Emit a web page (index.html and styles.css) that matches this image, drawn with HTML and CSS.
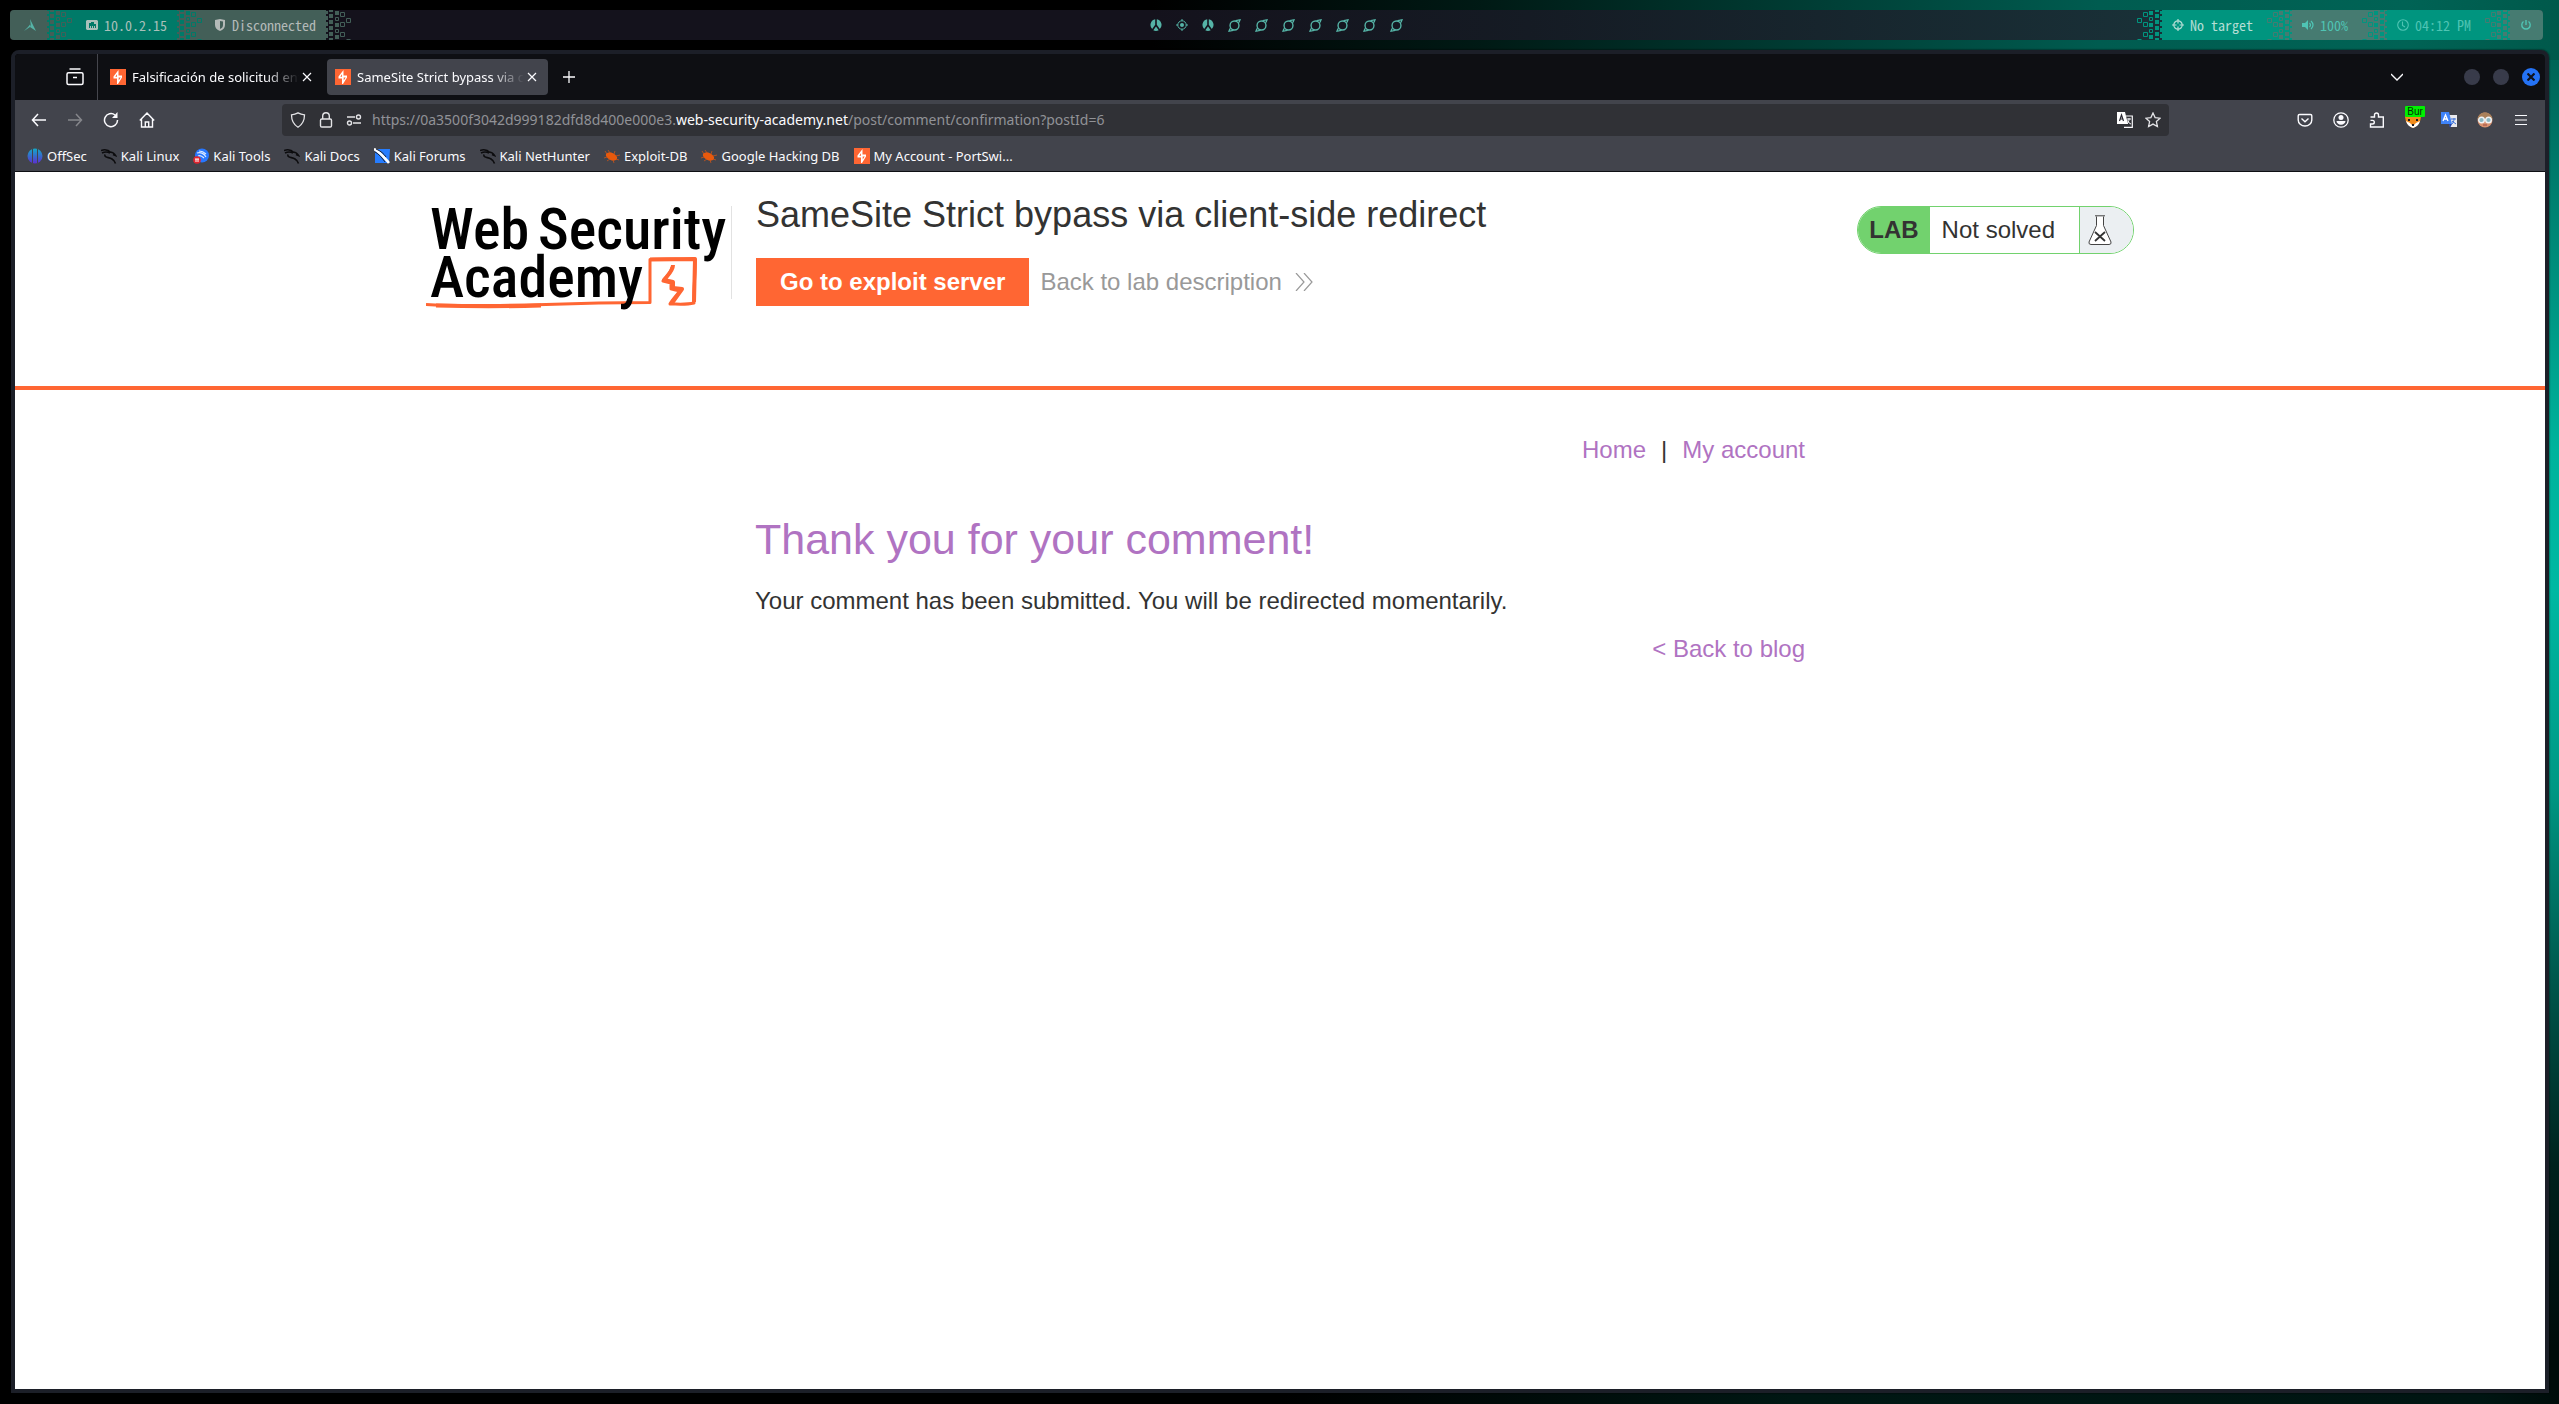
FILE: index.html
```html
<!DOCTYPE html>
<html lang="en">
<head>
<meta charset="utf-8">
<title>SameSite Strict bypass via client-side redirect</title>
<link rel="stylesheet" href="styles.css">
</head>
<body>
<svg class="defs" aria-hidden="true">
  <symbol id="fade" viewBox="0 0 28 30">
    <path fill="currentColor" d="M0 0h3v30H0zM3 1h2v3H3zM3 6h2v4H3zM3 12h2v4H3zM3 18h2v4H3zM3 24h2v4H3zM6 0h4v2H6zM6 4h4v4H6zM6 10h4v4H6zM6 16h4v4H6zM6 22h4v4H6zM6 28h4v2H6zM12 1h4v4h-4zM12 13h4v4h-4zM12 25h4v4h-4z"/>
    <path fill="none" stroke="currentColor" d="M12.500 7.500h3v3h-3zM12.500 19.500h3v3h-3zM17.500 2.500h4v4h-4zM17.500 12.500h4v4h-4zM17.500 22.500h4v4h-4zM23.500 8.500h4v4h-4zM23.500 29.500h4"/>
  </symbol>
  <symbol id="portswigger" viewBox="0 0 16 16">
    <path fill="#ff6633" d="M0 0h16v16H0z"/><path fill="#fff" d="M8.500 1v5.500H12v2L8 15H7V9.500H3.500v-2z"/><path fill="#ff6633" d="M7 5.200 5.300 7.700H7zM8.700 8.500v3l2-3z"/>
  </symbol>
  <symbol id="kali" viewBox="0 0 16 16">
    <path fill="none" stroke="#0c0c0e" stroke-width="1.600" d="M0 2.500c4-1.500 8 0 10 2M1 5c3-1.500 6-1 8 0M4 6.500C3 10 8 9 11 11c2 1.300 3 2.500 3.500 4.500M9 4c2 0 4 1 5.500 3.500L12 6.500"/>
  </symbol>
  <symbol id="bug" viewBox="0 0 16 16">
    <ellipse cx="7.500" cy="8.500" rx="6" ry="3.600" transform="rotate(25 7.500 8.500)" fill="#e8590c"/>
    <path stroke="#c9561b" stroke-width=".800" fill="none" d="M3 6 1 3M6 5 4 2M10 6l1-3M12 8l4-1M12 11l3 1M9 12l1 3M6 11l-3 2M3 9l-3 1"/>
  </symbol>
  <symbol id="radio" viewBox="0 0 12 12"><path fill="currentColor" d="M5.200.300v5.500L2.200 10A5.700 5.700 0 0 1 5.200.300zM6.800.300v5.500l3 4.200A5.700 5.700 0 0 0 6.800.300zM6 7.500l2.700 3.700a5.700 5.700 0 0 1-5.400 0z"/></symbol>
  <symbol id="planet" viewBox="0 0 14 14"><circle cx="7" cy="7" r="4.800" fill="none" stroke="currentColor" stroke-width="1.500"/><path stroke="currentColor" stroke-width="1.300" fill="none" d="M8 1.700C10 1.500 12 1 13 .800c-.500 1.500-1 2.500-1.700 3.200M6 12.300C4 12.500 2 13 1 13.200c.500-1.500 1-2.500 1.700-3.200"/></symbol>
  <symbol id="target" viewBox="0 0 12 12"><circle cx="6" cy="6" r="4.200" fill="none" stroke="currentColor"/><circle cx="6" cy="6" r="2" fill="currentColor"/><path stroke="currentColor" d="M6 0v2M6 10v2M0 6h2M10 6h2"/></symbol>
  <symbol id="crosshair" viewBox="0 0 12 12"><circle cx="6" cy="6" r="4.200" fill="none" stroke="currentColor" stroke-width="1.200"/><path stroke="currentColor" stroke-width="1.200" d="M6 0v4.500M6 7.500V12M0 6h4.500M7.500 6H12"/></symbol>
  <symbol id="close" viewBox="0 0 16 16"><path stroke="currentColor" stroke-width="1.200" d="m4 4 8 8M12 4l-8 8"/></symbol>
</svg>

<header class="panel">
  <div class="panel-group">
    <span class="seg slate first"><svg class="i12" viewBox="0 0 12 12"><path fill="#55b3a6" d="M6 0 12 12 6 8 0 12 4 8 6 5.500 7 8z"/></svg></span>
    <svg class="fade slate-on-green"><use href="#fade"/></svg>
    <span class="seg green ip"><svg class="i12" viewBox="0 0 12 12"><path fill="currentColor" fill-rule="evenodd" d="M1 1h10l1 1v8l-1 1H1l-1-1V2zM3 4v5h1V7h1v2h1V7h1v2h1V7h1v2h1V5H8V3H5v1z"/></svg>10.0.2.15</span>
    <svg class="fade green-on-slate"><use href="#fade"/></svg>
    <span class="seg slate vpn"><svg class="i12" viewBox="0 0 12 12"><path fill="currentColor" fill-rule="evenodd" d="M1 1 6 0l5 1v5c0 3-2 5-5 6-3-1-5-3-5-6zM6 2v8c2-1 3-2 3-4V2.500z"/></svg>Disconnected</span>
    <svg class="fade slate-edge"><use href="#fade"/></svg>
  </div>
  <div class="workspaces">
    <svg class="i12"><use href="#radio"/></svg><svg class="i12"><use href="#target"/></svg><svg class="i12"><use href="#radio"/></svg><svg class="i13"><use href="#planet"/></svg><svg class="i13"><use href="#planet"/></svg><svg class="i13"><use href="#planet"/></svg><svg class="i13"><use href="#planet"/></svg><svg class="i13"><use href="#planet"/></svg><svg class="i13"><use href="#planet"/></svg><svg class="i13"><use href="#planet"/></svg>
  </div>
  <div class="panel-group right">
    <svg class="fade mirror teal-edge"><use href="#fade"/></svg>
    <span class="seg teal goal"><svg class="i12"><use href="#crosshair"/></svg>No target</span>
    <svg class="fade mirror gray-on-teal"><use href="#fade"/></svg>
    <span class="seg gray"><svg class="i12" viewBox="0 0 12 12"><path fill="currentColor" d="M0 4h3l3-3v10L3 8H0z"/><path fill="none" stroke="currentColor" stroke-width="1.200" d="M7.500 4c1.300 1.300 1.300 2.700 0 4M9 2c2.500 2.500 2.500 5.500 0 8"/></svg>100%</span>
    <svg class="fade mirror teal-on-gray"><use href="#fade"/></svg>
    <span class="seg teal"><svg class="i12" viewBox="0 0 12 12"><circle cx="6" cy="6" r="5.300" fill="none" stroke="currentColor" stroke-width="1.100"/><path fill="none" stroke="currentColor" stroke-width="1.100" d="M5.500 2.500v4l2.500 1.500"/></svg>04:12 PM</span>
    <svg class="fade mirror gray-on-teal"><use href="#fade"/></svg>
    <span class="seg gray last"><svg class="i12" viewBox="0 0 12 12"><path fill="none" stroke="currentColor" stroke-width="1.400" d="M3.500 2.500a4.200 4.200 0 1 0 5 0M6 1v5"/></svg></span>
  </div>
</header>

<main class="window">
  <div class="tabs">
    <button class="view" aria-label="Firefox View"><svg class="i18" viewBox="0 0 18 18"><path fill="none" stroke="currentColor" stroke-width="1.500" d="M3.500 1h11M2.500 4.700h13q1.500 0 1.500 1.500V15q0 1.500-1.500 1.500h-13Q1 16.500 1 15V6.200q0-1.500 1.500-1.500zM7 9.500h4"/></svg></button>
    <div class="tab"><svg class="i16"><use href="#portswigger"/></svg><span class="tab-title">Falsificación de solicitud entre sitios</span><button aria-label="Close tab"><svg class="i16"><use href="#close"/></svg></button></div>
    <div class="tab active"><svg class="i16"><use href="#portswigger"/></svg><span class="tab-title">SameSite Strict bypass via client-side</span><button aria-label="Close tab"><svg class="i16"><use href="#close"/></svg></button></div>
    <button class="new" aria-label="New tab"><svg class="i12" viewBox="0 0 12 12"><path stroke="currentColor" stroke-width="1.300" d="M6 0v12M0 6h12"/></svg></button>
    <button class="list" aria-label="List all tabs"><svg class="i12" viewBox="0 0 12 12"><path fill="none" stroke="currentColor" stroke-width="1.300" d="m0 3 6 6 6-6"/></svg></button>
    <button class="dot" aria-label="Minimize"></button>
    <button class="dot" aria-label="Maximize"></button>
    <button class="dot shut" aria-label="Close"><svg class="i8" viewBox="0 0 8 8"><path stroke="#10131c" stroke-width="2.200" d="m0.500 0.500 7 7M7.500 0.500l-7 7"/></svg></button>
  </div>

  <div class="toolbar">
    <div class="tools">
      <button aria-label="Back"><svg class="i16" viewBox="0 0 16 16"><path fill="none" stroke="currentColor" stroke-width="1.500" d="M7 2 1.500 8 7 14M1.500 8H15"/></svg></button>
      <button class="off" aria-label="Forward"><svg class="i16" viewBox="0 0 16 16"><path fill="none" stroke="currentColor" stroke-width="1.500" d="m9 2 5.500 6L9 14M14.500 8H1"/></svg></button>
      <button aria-label="Reload"><svg class="i16" viewBox="0 0 16 16"><path fill="none" stroke="currentColor" stroke-width="1.500" d="M14.500 8A6.500 6.500 0 1 1 12 3"/><path fill="currentColor" d="M14.500 0v6H9z"/></svg></button>
      <button aria-label="Home"><svg class="i16" viewBox="0 0 16 16"><path fill="none" stroke="currentColor" stroke-width="1.400" d="m.800 8.500 7.200-7.500 7.200 7.500M2.500 7v8h11V7M6.300 15v-5h3.400v5"/></svg></button>
    </div>
    <div class="urlbar">
      <svg class="i16" viewBox="0 0 16 16"><path fill="none" stroke="currentColor" stroke-width="1.300" d="M8 .800c2 1 4.500 1.700 6.500 2 0 6-1.500 9.500-6.500 12.400C3 12.300 1.500 8.800 1.500 2.800c2-.300 4.500-1 6.500-2z"/></svg>
      <svg class="i16" viewBox="0 0 16 16"><path fill="none" stroke="currentColor" stroke-width="1.400" d="M3.800 7h8.400q1.300 0 1.300 1.300v5.400q0 1.300-1.300 1.300H3.800q-1.300 0-1.300-1.300V8.300Q2.500 7 3.800 7zM4.700 7V4a3.300 3.300 0 0 1 6.600 0v3"/></svg>
      <svg class="i16" viewBox="0 0 16 16"><path fill="none" stroke="currentColor" stroke-width="1.400" d="M1 5h8M7 11h8"/><circle cx="12.500" cy="5" r="2" fill="none" stroke="currentColor" stroke-width="1.400"/><circle cx="3.500" cy="11" r="2" fill="none" stroke="currentColor" stroke-width="1.400"/></svg>
      <div class="url">https://0a3500f3042d999182dfd8d400e000e3.<b>web-security-academy.net</b>/post/comment/confirmation?postId=6</div>
      <svg class="i16" viewBox="0 0 16 16"><path fill="#fff" d="M0 0h8l3 12H0z"/><path fill="none" stroke="#fbfbfe" stroke-width="1.200" d="M9 4h6.300v11.300H7"/><path fill="none" stroke="#2b2a33" stroke-width="1.200" d="m2.500 9 2-6 2 6M3 7h3"/><path fill="none" stroke="#fbfbfe" d="M10 7h4M12 6v1c0 2-1 4-2 5M10.500 8.500c1 2 2 3 3.500 3.500"/></svg>
      <svg class="i16" viewBox="0 0 16 16"><path fill="none" stroke="currentColor" stroke-width="1.300" d="m8 1 2.100 4.600 5 .600-3.700 3.400 1 5L8 12.100l-4.400 2.500 1-5L.900 6.200l5-.600z"/></svg>
    </div>
    <div class="tools addons">
      <button aria-label="Pocket"><svg class="i16" viewBox="0 0 16 16"><path fill="none" stroke="currentColor" stroke-width="1.400" d="M2.500 2.500h11q1.300 0 1.300 1.300V8a6.800 6 0 0 1-13.600 0V3.800q0-1.300 1.300-1.300zM4.500 6.500 8 9.800l3.500-3.300"/></svg></button>
      <button aria-label="Account"><svg class="i16" viewBox="0 0 16 16"><circle cx="8" cy="8" r="7.200" fill="none" stroke="currentColor" stroke-width="1.300"/><circle cx="8" cy="5.500" r="2.500" fill="currentColor"/><path fill="currentColor" d="M3.500 9h9c0 2-2 3.700-4.500 3.700S3.500 11 3.500 9z"/></svg></button>
      <button aria-label="Extensions"><svg class="i16" viewBox="0 0 16 16"><path fill="none" stroke="currentColor" stroke-width="1.400" d="M1.500 5h4V3a2 2 0 0 1 4 0v2h4.800v10H1.500v-3h2a1.800 1.800 0 0 0 0-3.600h-2"/></svg></button>
      <button class="proxy" aria-label="FoxyProxy"><svg class="i16" viewBox="0 0 16 16"><path fill="#f28c1c" d="M0 3h16c0 7-3 11-8 13C3 14 0 10 0 3z"/><path fill="#fff" d="m1 9 4 2 3 3 3-3 4-2c-1 4-4 6-7 7-3-1-6-3-7-7z"/><path fill="#1b1b22" d="M3 7h2v2H3zM11 7h2v2h-2zM7 12h2v2H7z"/></svg><span class="badge">Bur</span></button>
      <button aria-label="Translate"><svg class="i16" viewBox="0 0 16 16"><path fill="#e9eaee" d="M7 3h9v12H9z"/><path fill="#3f83f8" d="M0 0h8l3 12H0z"/><path fill="#1a3da6" d="M8 12h3l-2 4z"/><path fill="none" stroke="#fff" stroke-width="1.300" d="m2 9 2.500-6L7 9M3 7h3"/><path fill="none" stroke="#3a6fd8" d="M10 7h5M13 6v1c0 2-1 4-2 5M11 9l4 3"/></svg></button>
      <button aria-label="User agent"><svg class="i16" viewBox="0 0 16 16"><circle cx="8" cy="8" r="7.500" fill="#d8926f"/><path fill="#a9805a" d="M.500 7C1 3 4 .500 8 .500S15 3 15.500 7z"/><circle cx="4.500" cy="8" r="2.800" fill="#8bb7c1" stroke="#f0f3f5" stroke-width="1.400"/><circle cx="11.500" cy="8" r="2.800" fill="#8bb7c1" stroke="#f0f3f5" stroke-width="1.400"/><path stroke="#9b4b45" d="M6 13h4"/></svg></button>
      <button aria-label="Menu"><svg class="i12" viewBox="0 0 12 12"><path stroke="currentColor" stroke-width="1.200" d="M0 1.500h12M0 6h12M0 10.500h12"/></svg></button>
    </div>
  </div>

  <nav class="bookmarks">
    <a href="#"><svg class="i16" viewBox="0 0 16 16"><defs><linearGradient id="off" x2="0" y2="1"><stop stop-color="#12a9c9"/><stop offset="1" stop-color="#5b2fd0"/></linearGradient></defs><circle cx="8" cy="8" r="7.500" fill="url(#off)"/><path stroke="#42444c" d="M5.500 1v14M10.500 1v14"/></svg>OffSec</a>
    <a href="#"><svg class="i16"><use href="#kali"/></svg>Kali Linux</a>
    <a href="#"><svg class="i16" viewBox="0 0 16 16"><circle cx="9" cy="7.500" r="7" fill="#2777ff"/><path fill="none" stroke="#dceaff" stroke-width="1.100" d="M4 5c3-1 7 0 9 4M6 3c3 0 5 1 7 3M5 8c2-1 4 0 6 2"/><circle cx="4" cy="12" r="3.800" fill="#e0242e"/><path stroke="#fff" d="M2 11h4M3 11v3M5 11v3"/></svg>Kali Tools</a>
    <a href="#"><svg class="i16"><use href="#kali"/></svg>Kali Docs</a>
    <a href="#"><svg class="i16" viewBox="0 0 16 16"><path fill="#267dff" d="M1 1h15l-1 14H1z"/><path fill="none" stroke="#fff" stroke-width="2.600" d="M0 1c5 2 9 7 15 14"/><path fill="none" stroke="#20252f" d="M2 1c5 2 8 5 10 8M1 4c4 2 7 6 10 10"/></svg>Kali Forums</a>
    <a href="#"><svg class="i16"><use href="#kali"/></svg>Kali NetHunter</a>
    <a href="#"><svg class="i16"><use href="#bug"/></svg>Exploit-DB</a>
    <a href="#"><svg class="i16"><use href="#bug"/></svg>Google Hacking DB</a>
    <a href="#"><svg class="i16"><use href="#portswigger"/></svg>My Account - PortSwi...</a>
  </nav>

  <div class="page">
    <section class="lab-header">
      <div class="lab-inner">
        <svg class="logo" viewBox="0 0 300 120" role="img" aria-label="Web Security Academy">
          <path fill="none" stroke="#ff6633" stroke-width="3" stroke-linejoin="round" d="M0 104.500c30 2 80 1 120 0 40-1.500 70-2 104-2V59.500c12-1 30 0 45-.500 1 14-2 30-1 44-8 2-17 1-24 1 2-4 6-8 10-13-3-1-7-1-9-2v-6l-8-2c4-5 8-8 9-14"/>
          <path fill="none" stroke="#ff6633" stroke-width="4" stroke-linejoin="round" d="M247 65c0 6-6 11-9 15l9 2v6l9 1-10 14M224 59.500l45-.500-1 43M10 105.500c35 1 70 1 105 0"/>
          <text class="logo-text" x="4" y="49">Web</text><text class="logo-text" x="112" y="49">Security</text>
          <text class="logo-text" x="4" y="97">Academy</text>
        </svg>
        <div class="lab-title">
          <h2>SameSite Strict bypass via client-side redirect</h2>
          <div class="actions">
            <a class="exploit" href="#">Go to exploit server</a>
            <a class="back" href="#">Back to lab description <svg viewBox="0 0 18 18"><path fill="none" stroke="currentColor" stroke-width="1.200" d="m1 0 8 9-8 9M9 0l8 9-8 9"/></svg></a>
          </div>
        </div>
        <div class="status">
          <span class="status-lab">LAB</span><span class="status-text">Not solved</span>
          <span class="status-icon"><svg viewBox="0 0 24 30"><path fill="#fff" stroke="#444" d="M8.500 1.500v9L1 27q-.500 2.500 2 2.500h18q2.500 0 2-2.500l-7.500-16.500v-9M7 .800h10"/><path stroke="#333" stroke-width="1.800" d="m7 17 10 9M17 17 7 26"/></svg></span>
        </div>
      </div>
    </section>
    <section class="content">
      <div class="links"><a href="#">Home</a><span>|</span><a href="#">My account</a></div>
      <h1>Thank you for your comment!</h1>
      <p>Your comment has been submitted. You will be redirected momentarily.</p>
      <div class="links"><a href="#">&lt; Back to blog</a></div>
    </section>
  </div>
</main>
</body>
</html>
```
FILE: styles.css
```css
* { box-sizing: border-box; }

body {
  margin: 0;
  min-height: 100vh;
  display: flex;
  flex-direction: column;
  background:
    linear-gradient(90deg, #000 45%, #001a15 58%, #005c50 82%, #006355 94%, #00594b) top / 100% 60px no-repeat,
    linear-gradient(90deg, #000 50%, #001713 70%, #001512 97%, #000c0a) bottom / 100% 14px no-repeat,
    linear-gradient(180deg, #00594b, #006e60 8%, #00b39c 32%, #00b8a2 42%, #009884 56%, #00564b 70%, #00221d 83%, #000c0a 96%) right / 40px 100% no-repeat,
    #000;
  font-family: "Noto Sans", sans-serif;
  font-size: 13px;
}

.defs { position: absolute; width: 0; height: 0; }
svg { display: block; flex: none; }
.i8 { width: 8px; height: 8px; }
.i12 { width: 12px; height: 12px; }
.i13 { width: 13px; height: 13px; }
.i16 { width: 16px; height: 16px; }
.i18 { width: 18px; height: 18px; }

button {
  display: flex;
  align-items: center;
  justify-content: center;
  padding: 0;
  border: 0;
  background: none;
  color: inherit;
}
a { text-decoration: none; color: inherit; }

/* Desktop panel */
.panel {
  display: grid;
  grid-template-columns: 1fr auto 1fr;
  height: 30px;
  margin: 10px 16px 10px 10px;
  border-radius: 4px;
  overflow: hidden;
  background: linear-gradient(90deg, #14121c 45%, #151b24 60%, #193037 84%);
  font-family: "Noto Sans CJK JP", "Liberation Mono", monospace;
  font-feature-settings: "hwid";
  font-size: 14px;
  line-height: 30px;
}
.panel-group { display: flex; }
.seg {
  display: flex;
  align-items: center;
  gap: 6px;
  padding: 0 7px;
  white-space: nowrap;
}
.right { justify-content: flex-end; }
.right .seg { padding-right: 14px; }
.right .last { padding-right: 11px; }
.slate { background: #435f58; color: #b4bab8; }
.green { background: #007a68; color: #a9c0ba; }
.teal { background: #00957f; color: #4fc4b4; }
.gray { background: #467b71; color: #4fc4b4; }
.goal { color: #b5ded5; }
.first { padding: 0 8px 0 14px; }
.ip { padding-left: 14px; }
.vpn { padding-left: 12px; }
.fade { width: 28px; height: 30px; }
.mirror { transform: scaleX(-1); }
.slate-on-green { background: #007a68; color: #435f58; }
.green-on-slate { background: #435f58; color: #007a68; }
.slate-edge { color: #435f58; }
.teal-edge { color: #00957f; }
.gray-on-teal { background: #00957f; color: #467b71; }
.teal-on-gray { background: #467b71; color: #00957f; }
.workspaces { display: flex; align-items: center; gap: 14px; color: #55b3a6; }

/* Browser window */
.window {
  flex: 1;
  display: flex;
  flex-direction: column;
  margin: 0 10px 11px 11px;
  border: 4px solid #1c1f28;
  border-radius: 8px 8px 0 0;
  box-shadow: 0 0 2px #000;
  overflow: hidden;
  color: #fbfbfe;
}
.tabs {
  display: flex;
  align-items: center;
  height: 46px;
  padding-right: 5px;
  background: #0e0f13;
}
.view {
  align-self: stretch;
  width: 83px;
  padding-left: 38px;
  border-right: 1px solid #45464d;
  margin-right: 4px;
}
.tab {
  display: flex;
  align-items: center;
  width: 221px;
  height: 36px;
  margin-right: 4px;
  padding: 0 8px;
  border-radius: 4px;
}
.active { background: #42444c; }
.tab-title {
  flex: 1;
  min-width: 0;
  margin-left: 6px;
  overflow: hidden;
  white-space: nowrap;
  mask-image: linear-gradient(90deg, #000 80%, transparent);
}
.new { width: 34px; height: 34px; }
.list { width: 34px; height: 34px; margin: 0 50px 0 auto; }
.dot {
  width: 16px;
  height: 16px;
  margin-right: 13px;
  border-radius: 50%;
  background: #383b4a;
}
.shut { width: 18px; height: 18px; margin-right: 0; background: #2472f5; }

.toolbar {
  display: flex;
  align-items: center;
  height: 40px;
  background: #42444c;
}
.tools { display: flex; gap: 4px; padding-left: 8px; }
.tools button { width: 32px; height: 32px; }
.tools .off { color: #85868b; }
.urlbar {
  flex: 1;
  display: flex;
  align-items: center;
  gap: 12px;
  height: 32px;
  margin: 0 120px 0 119px;
  padding: 0 8px;
  border-radius: 4px;
  background: #303136;
  color: #e3e3e6;
}
.url { flex: 1; font-size: 14px; line-height: 18px; margin-left: -2px; color: #919297; }
.url b { font-weight: 400; color: #fbfbfe; }
.addons { padding: 0 8px 0 0; }
.proxy { position: relative; }
.badge {
  position: absolute;
  top: 2px;
  left: 8px;
  width: 20px;
  height: 11px;
  border-radius: 1px;
  background: #00f000;
  color: #053005;
  font-size: 10px;
  line-height: 11px;
}
.bookmarks {
  display: flex;
  align-items: center;
  gap: 14px;
  height: 32px;
  padding: 0 12px;
  background: #42444c;
  border-bottom: 1px solid #0e0f13;
}
.bookmarks a { display: flex; align-items: center; gap: 4px; line-height: 20px; white-space: nowrap; }

/* Lab page */
.page {
  flex: 1;
  background: #fff;
  color: #333332;
  font-family: "Liberation Sans", Arial, sans-serif;
  font-size: 24px;
  line-height: 28px;
}
.lab-header { height: 218px; border-bottom: 4px solid #ff6633; }
.lab-inner {
  display: flex;
  align-items: flex-start;
  max-width: 1708px;
  margin: 0 auto;
  padding-top: 21px;
}
.logo { width: 300px; height: 120px; margin-top: 7px; }
.logo-text {
  font-family: "Roboto Condensed", "Liberation Sans Narrow", "Roboto", sans-serif;
  font-size: 58px;
  font-weight: 500;
}
.lab-title {
  flex: 1;
  position: relative;
  margin-left: 30px;
}
.lab-title::before {
  content: "";
  position: absolute;
  left: -25px;
  top: 13px;
  width: 1px;
  height: 93px;
  background: #e2e2e2;
}
h2 { margin: 0; font-size: 36px; font-weight: 400; line-height: 44px; }
.actions { display: flex; align-items: center; gap: 11px; margin-top: 21px; }
.exploit { padding: 10px 24px; background: #ff6633; color: #fff; font-weight: 700; }
.back { display: flex; align-items: center; gap: 13px; color: #999; }
.back svg { width: 18px; height: 18px; }
.status {
  display: flex;
  align-items: center;
  height: 48px;
  margin-top: 13px;
  border: 1px solid #72d26e;
  border-radius: 24px;
  overflow: hidden;
  line-height: 46px;
}
.status-lab { padding: 0 11px; background: #72d26e; font-weight: 700; }
.status-text { padding: 0 24px 0 12px; }
.status-icon {
  display: flex;
  align-items: center;
  height: 46px;
  padding: 0 21px 0 8px;
  border-left: 1px solid #72d26e;
  background: #ebeff2;
}
.status-icon svg { width: 24px; height: 30px; }

.content { max-width: 1050px; margin: 0 auto; padding-top: 46px; }
.links { display: flex; justify-content: flex-end; gap: 15px; }
.content a, h1 { color: #b073c2; }
h1 { margin: 49px 0 22px; font-size: 43px; font-weight: 400; line-height: 52px; }
p { margin: 0 0 20px; }
```
